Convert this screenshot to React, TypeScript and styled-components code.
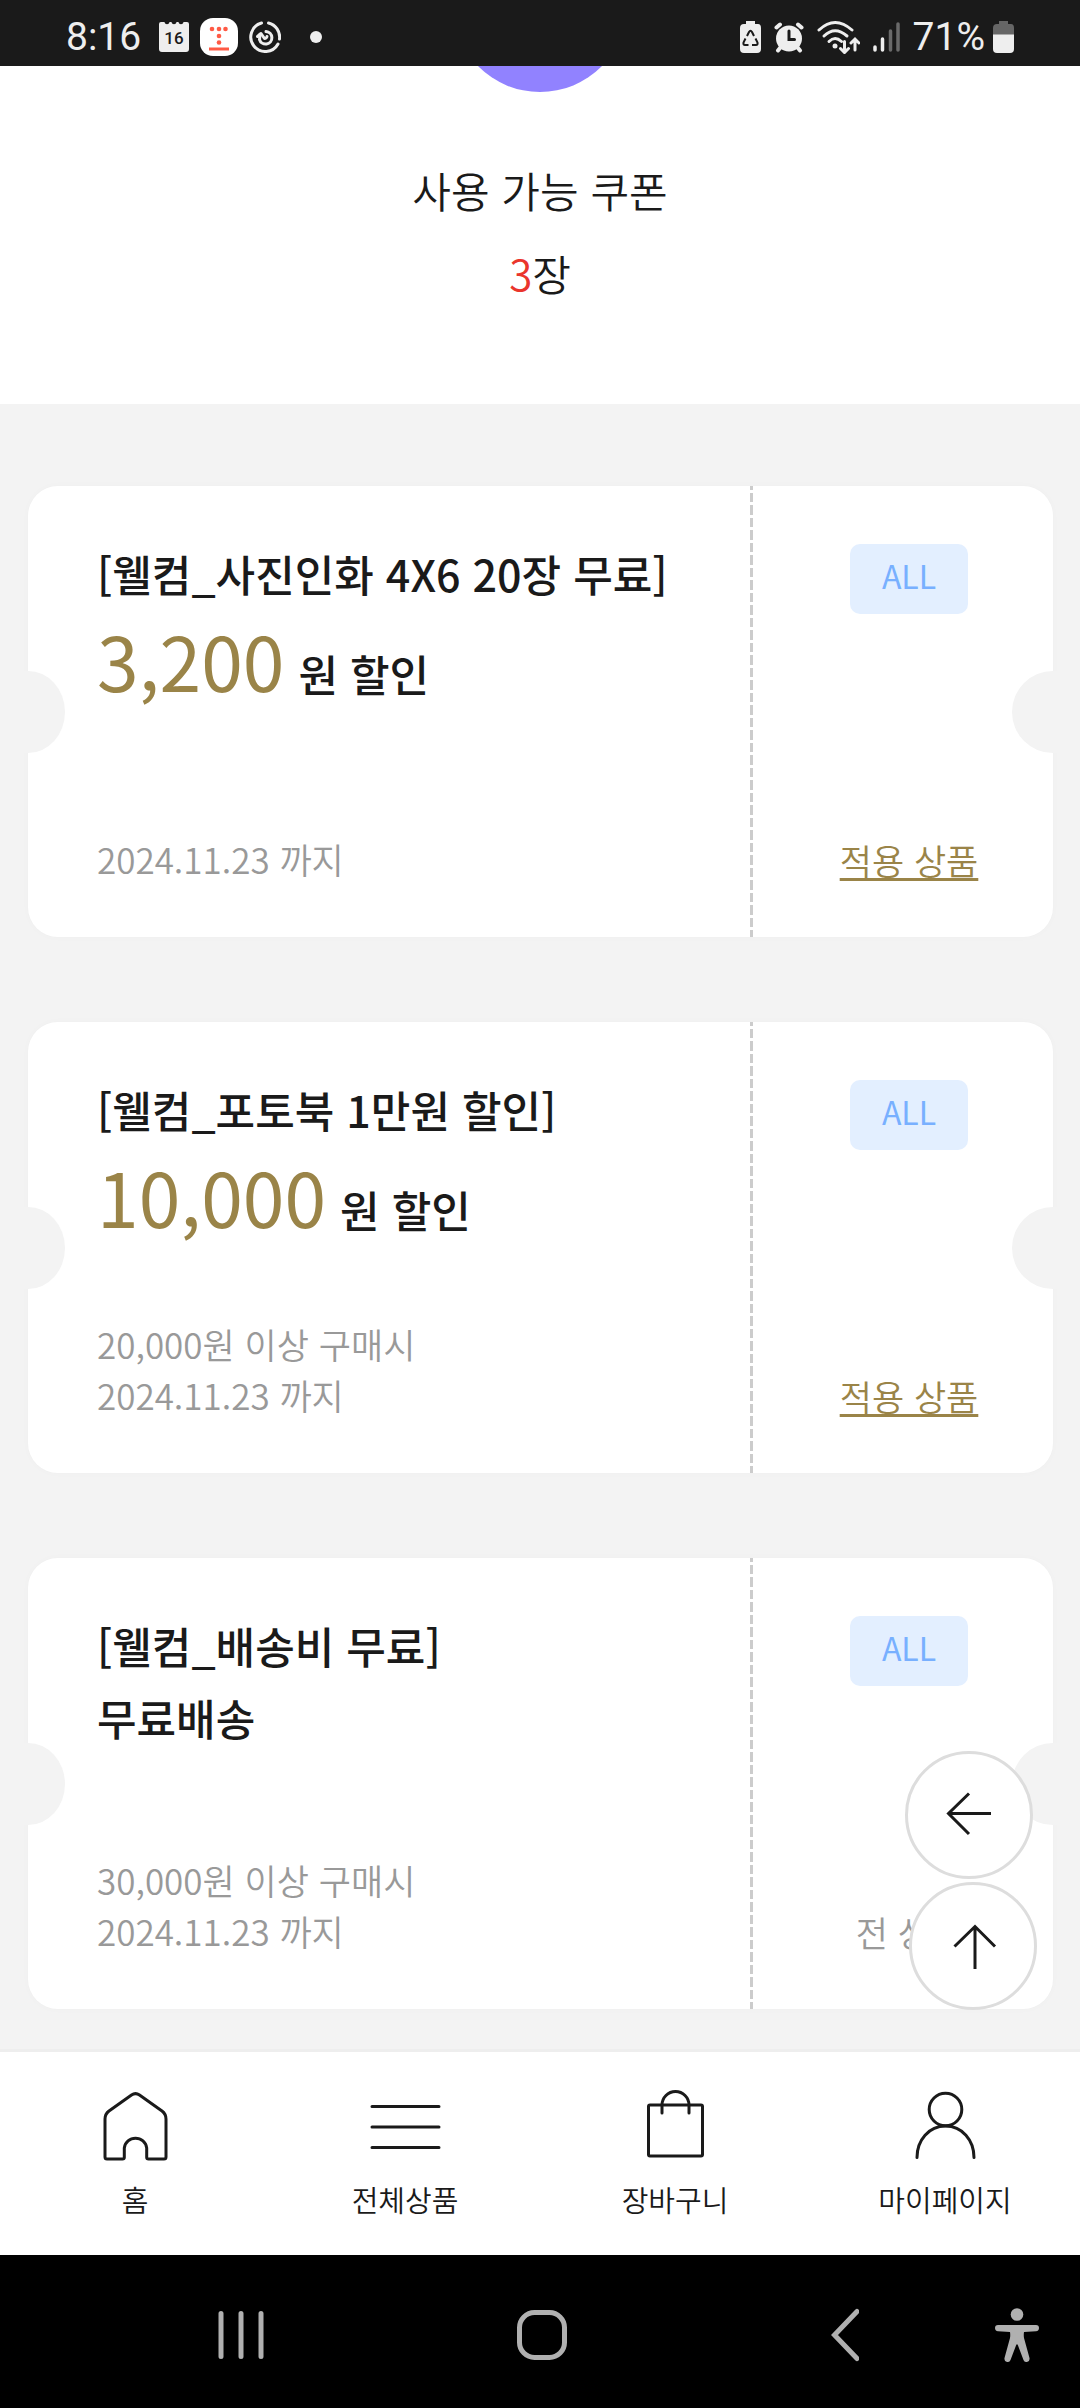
import React from "react";
import styled, { createGlobalStyle } from "styled-components";

const GlobalStyle = createGlobalStyle`
  *, *::before, *::after { box-sizing: border-box; }
  body {
    margin: 0;
    background: #f3f3f3;
    color: #1a1a1a;
    font-family: "Noto Sans CJK KR", "Noto Sans", sans-serif;
    font-weight: 350;
  }
  h1, h2, p, ul { margin: 0; padding: 0; font-weight: inherit; }
  button { border: 0; padding: 0; background: none; font: inherit; color: inherit; cursor: pointer; }
  a { color: inherit; }
  svg { display: block; flex: none; }
`;

const Screen = styled.div`
  display: flex;
  flex-direction: column;
  min-height: 100vh;
`;

/* ---------- status bar ---------- */

const StatusBar = styled.header`
  display: flex;
  align-items: center;
  justify-content: space-between;
  height: 66px;
  padding: 8px 66px 0;
  background: #1a1a1a;
  color: #eee;
  font-family: Roboto, sans-serif;
  font-size: 39px;
  font-weight: 400;
  line-height: 48px;
`;

const StatusGroup = styled.div<{ $gap: number }>`
  display: flex;
  align-items: center;
  gap: ${(p) => p.$gap}px;
`;

const StatusDot = styled.span`
  width: 12px;
  height: 12px;
  margin-left: 18px;
  border-radius: 50%;
  background: #eee;
`;

/* ---------- summary ---------- */

const Summary = styled.section`
  display: flex;
  flex-direction: column;
  align-items: center;
  padding-bottom: 90px;
  overflow: hidden;
  background: #fff;
  font-size: 42px;
  line-height: 83px;
  text-align: center;
`;

const SummaryBadge = styled.div`
  width: 174px;
  height: 174px;
  margin: -148px 0 56px;
  border-radius: 50%;
  background: #9182ff;
`;

const SummaryTitle = styled.h1`
  font-size: inherit;
`;

const Count = styled.span`
  color: #ea352c;
`;

/* ---------- coupons ---------- */

const Content = styled.main`
  position: relative;
  flex: 1;
  padding: 82px 27px 40px 28px;
`;

const CouponList = styled.ul`
  display: flex;
  flex-direction: column;
  gap: 85px;
  list-style: none;
`;

const Coupon = styled.li`
  position: relative;
  display: grid;
  grid-template-columns: 722fr 3px 300fr;
  min-height: 451px;
  border-radius: 30px;
  background: #fff;
  box-shadow: 0 0 8px rgba(0, 0, 0, 0.02);
`;

const Notch = styled.span<{ $side: "left" | "right" }>`
  position: absolute;
  top: 50%;
  ${(p) => p.$side}: -8px;
  width: ${(p) => (p.$side === "left" ? 45 : 49)}px;
  height: 82px;
  margin-top: -41px;
  border-radius: ${(p) => (p.$side === "left" ? "0 37px 37px 0 / 0 41px 41px 0" : "41px 0 0 41px")};
  background: #f3f3f3;
`;

const CouponBody = styled.div`
  display: flex;
  flex-direction: column;
  padding: 57px 24px 53px 69px;
`;

const CouponTitle = styled.h2`
  font-size: 43px;
  font-weight: 500;
  line-height: 60px;
  white-space: nowrap;
`;

const Benefit = styled.p`
  display: flex;
  align-items: baseline;
  gap: 14px;
  margin-top: 12px;
  font-size: 43px;
  font-weight: 500;
  line-height: 60px;
`;

const Amount = styled.strong`
  color: #9a8448;
  font-size: 75px;
  font-weight: 400;
  line-height: 90px;
`;

const Unit = styled.span`
  line-height: 44px;
`;

const Notes = styled.div`
  margin-top: auto;
  color: #999;
  font-size: 35px;
  line-height: 51px;
`;

const Perforation = styled.span`
  background: linear-gradient(#ccc 9px, #fff 9px 12px, #ccc 12px 22px, #fff 22px) 0 7px / 3px 25px repeat-y;
`;

const CouponSide = styled.div`
  display: flex;
  flex-direction: column;
  align-items: center;
  justify-content: space-between;
  padding: 58px 0 52px 12px;
`;

const ScopeBadge = styled.span`
  padding: 7px 32px 15px;
  border-radius: 10px;
  background: #e3efff;
  color: #78b0ff;
  font-size: 32px;
  font-weight: 400;
  line-height: 48px;
`;

const ProductsLink = styled.a`
  color: #9a8448;
  font-size: 35px;
  line-height: 51px;
  text-decoration: underline;
  text-decoration-thickness: 3px;
  text-decoration-skip-ink: none;
  text-underline-offset: 3px;
`;

const AllProducts = styled.span`
  color: #999;
  font-size: 35px;
  line-height: 51px;
`;

const FloatingButton = styled.button<{ $right: number; $bottom: number }>`
  position: absolute;
  right: ${(p) => p.$right}px;
  bottom: ${(p) => p.$bottom}px;
  display: grid;
  place-items: center;
  width: 128px;
  height: 128px;
  border: 3px solid #ddd;
  border-radius: 50%;
  background: #fff;
`;

/* ---------- bottom bars ---------- */

const TabBar = styled.nav`
  display: grid;
  grid-template-columns: repeat(4, 1fr);
  border-top: 3px solid #eee;
  background: #fff;
`;

const Tab = styled.a`
  display: flex;
  flex-direction: column;
  align-items: center;
  gap: 12px;
  padding: 33px 0 34px;
  font-size: 29px;
  line-height: 44px;
  text-decoration: none;
`;

const SystemBar = styled.nav`
  display: grid;
  grid-template-columns: repeat(3, 1fr) 85px;
  align-items: center;
  height: 153px;
  padding: 6px 0 0 90px;
  background: #000;
`;

const SystemButton = styled.button`
  justify-self: center;
  &:last-child { justify-self: start; }
`;

const stroke = {
  fill: "none",
  stroke: "#1a1a1a",
  strokeWidth: 3,
  strokeLinecap: "round" as const,
  strokeLinejoin: "round" as const,
};

const CalendarIcon = () => (
  <svg width="30" height="32" viewBox="0 0 30 32" aria-hidden="true">
    <path
      d="M2 1H5.500C6 4 10 4 10.500 1H12.500C13 4 17 4 17.500 1H19.500C20 4 24 4 24.500 1H28Q30 1 30 3V28Q30 31 27 31H3Q0 31 0 28V3Q0 1 2 1Z"
      fill="#eee"
    />
    <text x="15" y="23" textAnchor="middle" fontFamily="Roboto, sans-serif" fontSize="17" fontWeight="500" fill="#1a1a1a">
      16
    </text>
  </svg>
);

const TerminalIcon = () => (
  <svg width="38" height="38" viewBox="0 0 38 38" aria-hidden="true">
    <rect width="38" height="38" rx="13" fill="#fff" />
    <g fill="#ff5a45">
      <circle cx="12" cy="11" r="2.3" />
      <circle cx="19" cy="11" r="2.3" />
      <circle cx="25.500" cy="11" r="2.3" />
      <circle cx="19" cy="18" r="2.3" />
      <circle cx="19" cy="24.500" r="2.3" />
      <rect x="9" y="29.500" width="20" height="3" />
    </g>
  </svg>
);

const SwirlIcon = () => (
  <svg width="32" height="32" viewBox="0 0 32 32" fill="none" stroke="#eee" strokeWidth="3" strokeLinecap="round" aria-hidden="true">
    <path d="M12.500 2A14.500 14.500 0 1 0 29 23" />
    <path d="M19.500 2A14.500 14.500 0 0 1 30.500 18" />
    <path d="M17 10.500A6.300 6.300 0 1 1 10.500 18.500L11 13.500" />
    <path d="M8.500 15.500L12 12.500L15.500 17.500Q17.500 17.500 18 15.500" strokeLinejoin="round" />
  </svg>
);

const RecycleBatteryIcon = () => (
  <svg width="21" height="32" viewBox="0 0 21 32" aria-hidden="true">
    <path d="M6 0H15V3H18Q21 3 21 7V28Q21 32 17 32H4Q0 32 0 28V7Q0 3 4 3H6Z" fill="#eee" />
    <g fill="none" stroke="#1a1a1a" strokeWidth="2">
      <path d="M7 15L9 11Q10.500 8.500 12 11L14 15" />
      <path d="M15.500 17.500L17.500 21.500Q18 24 16 24H12" />
      <path d="M8.500 24H5Q3 24 3.500 21.500L5.500 17.500" />
    </g>
  </svg>
);

const AlarmIcon = () => (
  <svg width="30" height="32" viewBox="0 0 30 32" aria-hidden="true">
    <circle cx="15" cy="17.500" r="13" fill="#eee" />
    <g fill="none" stroke="#eee" strokeWidth="4" strokeLinecap="round">
      <path d="M2.500 6.500L6 3.500" />
      <path d="M27.500 6.500L24 3.500" />
      <path d="M6 27L4 29.500" />
      <path d="M24 27L26 29.500" />
    </g>
    <path d="M15 10V18.500H20.500" fill="none" stroke="#1a1a1a" strokeWidth="3" strokeLinecap="round" />
  </svg>
);

const WifiIcon = () => (
  <svg width="43" height="34" viewBox="0 0 43 34" fill="none" stroke="#eee" strokeWidth="3" strokeLinecap="round" aria-hidden="true">
    <path d="M2 10Q18 -5 35 10" />
    <path d="M7 16Q18 5.500 30 16" />
    <path d="M12 21.500Q18 15.500 24.500 21.500" />
    <circle cx="18" cy="26" r="2.500" fill="#eee" stroke="none" />
    <path d="M27.500 21.500V32M23.500 28.500L27.500 32.500L31.500 28.500" />
    <path d="M38 30V19.500M34 23L38 19L42 23" />
  </svg>
);

const SignalIcon = () => (
  <svg width="27" height="32" viewBox="0 0 27 32" strokeWidth="3.500" strokeLinecap="round" aria-hidden="true">
    <path d="M2 26V29M9.500 18V29" stroke="#eee" />
    <path d="M17.500 10V29M25 3V29" stroke="#6a6a6a" />
  </svg>
);

const BatteryIcon = () => (
  <svg width="21" height="32" viewBox="0 0 21 32" aria-hidden="true">
    <path d="M6 0H15V3H18Q21 3 21 7V14H0V7Q0 3 4 3H6Z" fill="#666" />
    <path d="M0 13.500H21V28Q21 32 17 32H4Q0 32 0 28Z" fill="#eee" />
  </svg>
);

const TabIcon = ({ children }: { children: React.ReactNode }) => (
  <svg width="80" height="80" viewBox="0 0 80 80" {...stroke} aria-hidden="true">
    {children}
  </svg>
);

const tabs = [
  {
    label: "홈",
    icon: (
      <path d="M36.500 10Q40.500 7.200 44.500 10L67 26Q71 29 71 34V72Q71 74 69 74H53.500Q51.700 74 51.700 72.500V63A11.300 11.300 0 0 0 29.300 63V72.500Q29.300 74 27.500 74H12Q10 74 10 72V34Q10 29 14 26Z" />
    ),
  },
  { label: "전체상품", icon: <path d="M7 21.500H74M7 42H74M7 62.500H74" /> },
  {
    label: "장바구니",
    icon: (
      <>
        <rect x="13.500" y="20" width="54" height="51" rx="1.500" />
        <path d="M27 28V20A13.500 13.500 0 0 1 54 20V28" />
      </>
    ),
  },
  {
    label: "마이페이지",
    icon: (
      <>
        <circle cx="40.500" cy="24.500" r="16.300" />
        <path d="M12 72.500C12 55 24 41 40.500 41S69 55 69 72.500" />
      </>
    ),
  },
];

interface CouponData {
  title: string;
  amount?: string;
  benefit: string;
  notes: string[];
  restricted: boolean;
}

const coupons: CouponData[] = [
  {
    title: "[웰컴_사진인화 4X6 20장 무료]",
    amount: "3,200",
    benefit: "원 할인",
    notes: ["2024.11.23 까지"],
    restricted: true,
  },
  {
    title: "[웰컴_포토북 1만원 할인]",
    amount: "10,000",
    benefit: "원 할인",
    notes: ["20,000원 이상 구매시", "2024.11.23 까지"],
    restricted: true,
  },
  {
    title: "[웰컴_배송비 무료]",
    benefit: "무료배송",
    notes: ["30,000원 이상 구매시", "2024.11.23 까지"],
    restricted: false,
  },
];

export default function App() {
  return (
    <Screen lang="ko">
      <GlobalStyle />
      <StatusBar>
        <StatusGroup $gap={18}>
          <time>8:16</time>
          <StatusGroup $gap={11}>
            <CalendarIcon />
            <TerminalIcon />
            <SwirlIcon />
            <StatusDot />
          </StatusGroup>
        </StatusGroup>
        <StatusGroup $gap={13}>
          <RecycleBatteryIcon />
          <AlarmIcon />
          <WifiIcon />
          <SignalIcon />
          <StatusGroup $gap={8}>
            <span>71%</span>
            <BatteryIcon />
          </StatusGroup>
        </StatusGroup>
      </StatusBar>

      <Summary>
        <SummaryBadge />
        <SummaryTitle>사용 가능 쿠폰</SummaryTitle>
        <p>
          <Count>3</Count>장
        </p>
      </Summary>

      <Content>
        <CouponList>
          {coupons.map((coupon) => (
            <Coupon key={coupon.title}>
              <CouponBody>
                <CouponTitle>{coupon.title}</CouponTitle>
                <Benefit>
                  {coupon.amount ? (
                    <>
                      <Amount>{coupon.amount}</Amount>
                      <Unit>{coupon.benefit}</Unit>
                    </>
                  ) : (
                    coupon.benefit
                  )}
                </Benefit>
                <Notes>
                  {coupon.notes.map((note) => (
                    <p key={note}>{note}</p>
                  ))}
                </Notes>
              </CouponBody>
              <Perforation />
              <CouponSide>
                <ScopeBadge>ALL</ScopeBadge>
                {coupon.restricted ? (
                  <ProductsLink href="#products">적용 상품</ProductsLink>
                ) : (
                  <AllProducts>전 상품</AllProducts>
                )}
              </CouponSide>
              <Notch $side="left" />
              <Notch $side="right" />
            </Coupon>
          ))}
        </CouponList>

        <FloatingButton type="button" aria-label="뒤로" $right={47} $bottom={170}>
          <svg width="48" height="48" viewBox="0 0 48 48" {...stroke} strokeLinecap="butt" strokeLinejoin="miter">
            <path d="M46 22.500H3M24 2.500L3.500 22.500L24 43" />
          </svg>
        </FloatingButton>
        <FloatingButton type="button" aria-label="맨 위로" $right={43} $bottom={39}>
          <svg width="48" height="48" viewBox="0 0 48 48" {...stroke} strokeLinecap="butt" strokeLinejoin="miter">
            <path d="M26 47V4M5.500 24.500L26 4.500L46 24.500" />
          </svg>
        </FloatingButton>
      </Content>

      <TabBar>
        {tabs.map((tab) => (
          <Tab key={tab.label} href="#">
            <TabIcon>{tab.icon}</TabIcon>
            {tab.label}
          </Tab>
        ))}
      </TabBar>

      <SystemBar>
        <SystemButton type="button" aria-label="최근 앱">
          <svg width="46" height="54" viewBox="0 0 46 54" stroke="#b0b0b0" strokeWidth="5" strokeLinecap="round">
            <path d="M3 5.500V48.500M23 5.500V48.500M43 5.500V48.500" />
          </svg>
        </SystemButton>
        <SystemButton type="button" aria-label="홈 화면">
          <svg width="50" height="54" viewBox="0 0 50 54" fill="none" stroke="#b0b0b0" strokeWidth="5">
            <rect x="2.500" y="4.500" width="45" height="45" rx="15" />
          </svg>
        </SystemButton>
        <SystemButton type="button" aria-label="이전">
          <svg width="30" height="54" viewBox="0 0 30 54" fill="none" stroke="#b0b0b0" strokeWidth="5" strokeLinecap="round">
            <path d="M28 3.500L5.500 27L28 50.500" />
          </svg>
        </SystemButton>
        <SystemButton type="button" aria-label="접근성">
          <svg width="44" height="54" viewBox="0 0 44 54" fill="#b0b0b0">
            <circle cx="22" cy="6.500" r="6.300" />
            <path d="M3 17H41Q44 17 44 20T41 23.200L29 24Q28.500 27 29 30L34.500 50Q35 53.500 32 54Q29.500 54.300 28.500 52L23 37.500Q22 35 21 37.500L15.500 52Q14.500 54.300 12 54Q9 53.500 9.500 50L15 30Q15.500 27 15 24L3 23.200Q0 23 0 20T3 17Z" />
          </svg>
        </SystemButton>
      </SystemBar>
    </Screen>
  );
}
